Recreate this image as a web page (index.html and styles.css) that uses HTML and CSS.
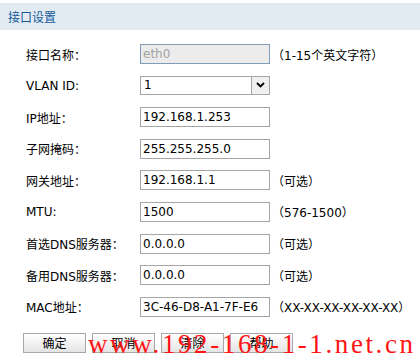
FILE: index.html
```html
<!DOCTYPE html>
<html lang="zh-CN">
<head>
<meta charset="utf-8">
<title>接口设置</title>
<link rel="stylesheet" href="styles.css">
</head>
<body>
<div class="page">
  <div class="title-bar">接口设置</div>
  <div class="form">
    <div class="label">接口名称：</div>
    <div class="field"><div class="input disabled">eth0</div></div>
    <div class="hint">（1-15个英文字符）</div>

    <div class="label">VLAN ID:</div>
    <div class="field">
      <div class="select">
        <span class="select-value">1</span>
        <span class="select-btn"><svg width="9" height="6" viewBox="0 0 9 6"><path d="M1 1 L4.5 4.5 L8 1" fill="none" stroke="#000" stroke-width="1.8"/></svg></span>
      </div>
    </div>
    <div class="hint"></div>

    <div class="label">IP地址：</div>
    <div class="field"><div class="input">192.168.1.253</div></div>
    <div class="hint"></div>

    <div class="label">子网掩码：</div>
    <div class="field"><div class="input">255.255.255.0</div></div>
    <div class="hint"></div>

    <div class="label">网关地址：</div>
    <div class="field"><div class="input">192.168.1.1</div></div>
    <div class="hint">（可选）</div>

    <div class="label">MTU:</div>
    <div class="field"><div class="input">1500</div></div>
    <div class="hint">（576-1500）</div>

    <div class="label">首选DNS服务器：</div>
    <div class="field"><div class="input">0.0.0.0</div></div>
    <div class="hint">（可选）</div>

    <div class="label">备用DNS服务器：</div>
    <div class="field"><div class="input">0.0.0.0</div></div>
    <div class="hint">（可选）</div>

    <div class="label">MAC地址：</div>
    <div class="field"><div class="input">3C-46-D8-A1-7F-E6</div></div>
    <div class="hint">（XX-XX-XX-XX-XX-XX）</div>
  </div>
  <div class="buttons">
    <div class="btn">确定</div>
    <div class="btn">取消</div>
    <div class="btn">清除</div>
    <div class="btn">帮助</div>
  </div>
  <div class="watermark">www.192-168-1-1.net.cn</div>
</div>
</body>
</html>
```
FILE: styles.css
```css
html, body {
  margin: 0;
  padding: 0;
  background: #ffffff;
}
body {
  font-family: "DejaVu Sans", "Noto Sans CJK SC", sans-serif;
  font-size: 12px;
  color: #000;
}
.page {
  position: relative;
  width: 420px;
  height: 361px;
  overflow: hidden;
  padding-top: 3px;
  box-sizing: border-box;
}
.title-bar {
  height: 27px;
  line-height: 27px;
  background: #e2ebf2;
  color: #145a9a;
  padding-left: 8px;
  font-family: "Noto Sans CJK SC", sans-serif;
  font-size: 12px;
}
.form {
  display: grid;
  grid-template-columns: 114px 130px auto;
  grid-auto-rows: 20px;
  row-gap: 11.6px;
  padding-left: 26px;
  margin-top: 14px;
  align-items: center;
}
.label {
  font-family: "DejaVu Sans", "Noto Sans CJK SC", sans-serif;
  white-space: nowrap;
}
.field {
  height: 20px;
}
.input {
  box-sizing: border-box;
  height: 20px;
  width: 130px;
  border: 1px solid #a5a5a5;
  line-height: 18px;
  padding-left: 2px;
  background: #fff;
  white-space: nowrap;
  overflow: hidden;
}
.input.disabled {
  border-color: #7f9db9;
  background: #ececec;
  color: #a3a3a3;
}
.select {
  box-sizing: border-box;
  height: 19px;
  width: 130px;
  border: 1px solid #a5a5a5;
  display: flex;
  align-items: stretch;
}
.select-value {
  flex: 1;
  line-height: 17px;
  padding-left: 3px;
}
.select-btn {
  width: 17px;
  border-left: 1px solid #a5a5a5;
  background: #f0f0f0;
  display: flex;
  align-items: center;
  justify-content: center;
}
.hint {
  white-space: nowrap;
  padding-left: 2px;
}
.buttons {
  display: flex;
  gap: 6px;
  padding-left: 23px;
  margin-top: 16px;
}
.btn {
  box-sizing: border-box;
  width: 63px;
  height: 20px;
  line-height: 18px;
  text-align: center;
  border: 1px solid #a8a8a8;
  background: linear-gradient(#ffffff, #e4e4e4);
  font-family: "Noto Sans CJK SC", sans-serif;
  font-size: 12px;
}
.watermark {
  position: absolute;
  left: 88px;
  top: 327px;
  font-family: "Liberation Serif", serif;
  font-size: 27px;
  letter-spacing: 2.6px;
  color: #ff1414;
  white-space: nowrap;
  line-height: 34px;
}
```
